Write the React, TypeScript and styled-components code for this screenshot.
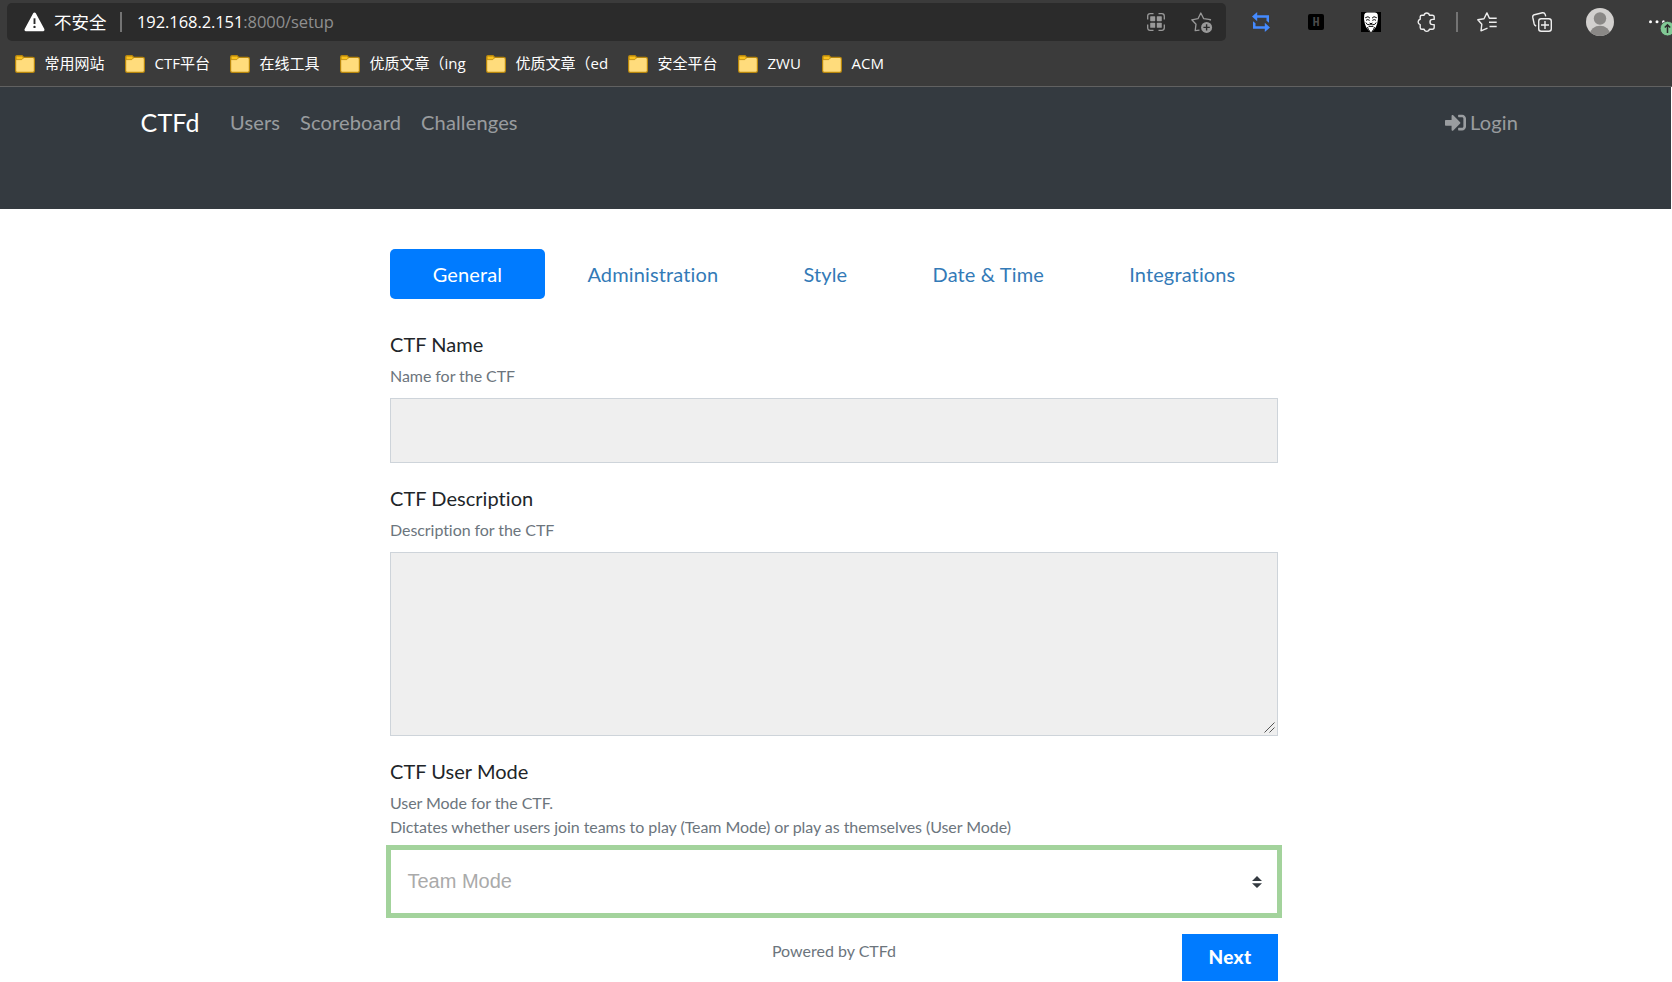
import React from "react";
import styled, { createGlobalStyle } from "styled-components";
import { FaSignInAlt } from "react-icons/fa";

const Global = createGlobalStyle`
  *, *::before, *::after { box-sizing: border-box; }
  html, body { margin: 0; padding: 0; background: #fff; overflow: hidden; }
  body { font-family: Lato, "Noto Sans", sans-serif; font-size: 20px; line-height: 30px; color: #212529; font-variant-ligatures: none; }
`;

const Screen = styled.div`
  width: 1672px;
  height: 982px;
  overflow: hidden;
  display: flex;
  flex-direction: column;
`;

const Chrome = styled.header`
  height: 87px;
  flex: none;
  background: #3b3b3b;
  border-bottom: 1px solid #616161;
  font-family: "Open Sans", "Noto Sans CJK SC", sans-serif;
  color: #fff;
`;

const Toolbar = styled.div`
  height: 44px;
  display: flex;
  align-items: center;
  padding-left: 7px;
`;

const AddressBar = styled.div`
  width: 1219px;
  height: 38px;
  border-radius: 5px;
  background: #2b2b2b;
  display: flex;
  align-items: center;
  padding: 0 14px 0 17px;
`;

const Insecure = styled.span`
  width: 65px;
  padding-left: 9px;
  font-size: 17.5px;
  line-height: 24px;
  white-space: nowrap;
`;

const Divider = styled.span<{ $left?: number }>`
  width: 2px;
  height: 20px;
  flex: none;
  margin-left: ${(p) => p.$left ?? 0}px;
  background: #747474;
`;

const Url = styled.span`
  flex: 1;
  margin-left: 15px;
  font-size: 16.5px;
  line-height: 24px;
  letter-spacing: -0.08px;
  white-space: nowrap;
`;

const UrlRest = styled.span`
  color: #8f8f8f;
`;

const Icon = styled.svg<{ $left?: number }>`
  display: block;
  flex: none;
  overflow: visible;
  margin-left: ${(p) => p.$left ?? 0}px;
`;

const Bookmarks = styled.nav`
  height: 40px;
  display: flex;
  align-items: center;
  padding-left: 15px;
`;

const Bookmark = styled.span<{ $slot: number }>`
  width: ${(p) => p.$slot}px;
  display: flex;
  align-items: center;
  gap: 9.5px;
  font-size: 15px;
  line-height: 20px;
  white-space: nowrap;
`;

const BookmarkName = styled.span`
  padding-bottom: 2px;
`;

const Navbar = styled.nav`
  width: 1671px;
  height: 122px;
  flex: none;
  background: #343a40;
  display: flex;
  align-items: flex-start;
  padding: 20px 143px 0 140.5px;
`;

const Brand = styled.a`
  width: 79.5px;
  font-size: 25px;
  letter-spacing: 0.2px;
  color: #fff;
`;

const NavLink = styled.a`
  display: flex;
  align-items: center;
  gap: 4px;
  margin: 0 10px;
  letter-spacing: 0.15px;
  color: rgba(255, 255, 255, 0.5);
`;

const Spacer = styled.span`
  flex: 1;
`;

const Setup = styled.main`
  width: 888px;
  margin: 40px 0 0 390px;
  display: flex;
  flex-direction: column;
`;

const Tabs = styled.div`
  display: flex;
  margin-bottom: 30px;
`;

const Tab = styled.a<{ $active?: boolean }>`
  flex: 1 1 auto;
  padding: 10px 20px;
  text-align: center;
  letter-spacing: 0.13px;
  border-radius: 5px;
  color: ${(p) => (p.$active ? "#fff" : "#337ab7")};
  background: ${(p) => (p.$active ? "#007bff" : "transparent")};
`;

const Field = styled.div`
  display: flex;
  flex-direction: column;
  margin-bottom: 20px;
`;

const Label = styled.label`
  height: 35px;
  letter-spacing: 0.04px;
`;

const Help = styled.small`
  font-size: 16px;
  line-height: 24px;
  letter-spacing: -0.06px;
  color: #6c757d;
`;

const TextBox = styled.div<{ $height: number }>`
  height: ${(p) => p.$height}px;
  margin-top: 10px;
  background: #efefef;
  border: 1px solid #ced4da;
  display: flex;
  justify-content: flex-end;
  align-items: flex-end;
`;

const Select = styled.div`
  height: 73px;
  margin: 6px -4px 0;
  border: 5px solid #a3d39c;
  display: flex;
  align-items: center;
  justify-content: space-between;
  padding: 0 15px 0 16.5px;
  font-family: "Liberation Sans", sans-serif;
  color: #aaa;
`;

const SelectValue = styled.span`
  padding-bottom: 2px;
`;

const Footer = styled.footer`
  display: grid;
  grid-template-columns: 1fr auto 1fr;
  align-items: start;
  margin-top: -4px;
`;

const Powered = styled(Help)`
  grid-column: 2;
  margin-top: 5px;
  letter-spacing: 0;
`;

const NextButton = styled.button`
  justify-self: end;
  width: 96px;
  height: 47px;
  border: 0;
  padding: 0 0 2px;
  background: #007bff;
  color: #fff;
  font: 900 19px/30px Lato, sans-serif;
  letter-spacing: 0.3px;
`;

const bookmarks: [string, number][] = [
  ["常用网站", 110],
  ["CTF平台", 105],
  ["在线工具", 110],
  ["优质文章（ing", 146],
  ["优质文章（ed", 142],
  ["安全平台", 110],
  ["ZWU", 84],
  ["ACM", 90],
];

const Folder = () => (
  <Icon width="20" height="18" viewBox="0 0 20 18">
    <path d="M.6 2.3Q.6.6 2.2.6H7L8.8 2.4H17.7Q19.4 2.4 19.4 4V15.7Q19.4 17.4 17.7 17.4H2.3Q.6 17.4.6 15.7Z" fill="#ffdc7c" stroke="#b8860b" strokeWidth="1.2" />
    <path d="M1.2 4.6V2.4Q1.2 1.2 2.4 1.2H6.8L8.5 2.8 6.8 4.6Z" fill="#fcc21b" stroke="#b8860b" strokeWidth=".8" />
  </Icon>
);

const Warning = () => (
  <Icon width="21" height="20" viewBox="0 0 21 20">
    <path d="M10.5 2 19 17.8H2Z" fill="#fff" stroke="#fff" strokeWidth="3" strokeLinejoin="round" />
    <path d="M10.5 6.3v5.7" stroke="#2b2b2b" strokeWidth="1.9" />
    <circle cx="10.5" cy="14.9" r="1.2" fill="#2b2b2b" />
  </Icon>
);

const Apps = () => (
  <Icon width="18" height="18" viewBox="0 0 18 18" fill="#999">
    <path d="M6.5.7H3.2Q.7.7.7 3.2v3.3M11.5.7h3.3q2.5 0 2.5 2.5v3.3M17.3 11.5v3.3q0 2.5-2.5 2.5h-3.3M6.5 17.3H3.2Q.7 17.3.7 14.8v-3.3" fill="none" stroke="#999" strokeWidth="1.3" />
    <rect x="3.2" y="3.2" width="5" height="5" rx=".6" />
    <rect x="9.8" y="3.2" width="5" height="5" rx=".6" />
    <rect x="3.2" y="9.8" width="5" height="5" rx=".6" />
    <rect x="9.8" y="9.8" width="5" height="5" rx=".6" />
  </Icon>
);

const AddFavorite = () => (
  <Icon width="21" height="20" viewBox="0 0 21 20" $left={26}>
    <path d="M8.5 18.2 4.2 18.6 5 12.2.8 7.8 7 6.7 9.8 1l2.9 5.7 6.8 1-.8 1" fill="none" stroke="#999" strokeWidth="1.3" strokeLinejoin="round" />
    <circle cx="15.6" cy="15.4" r="5.5" fill="#999" />
    <path d="M12.4 15.4h6.4M15.6 12.2v6.4" stroke="#2b2b2b" strokeWidth="1.4" />
  </Icon>
);

const Loop = () => (
  <Icon width="18" height="20" viewBox="0 0 18 20" $left={26} fill="#448aff">
    <path d="M0 4.600 5.200 0V3.200H17V10.800L14.500 8.800V5.800H5.200V9.200Z" />
    <path d="M18 15.400 12.800 20V16.800H1V9.200L3.500 11.200V14.200H12.800V10.800Z" />
  </Icon>
);

const LetterTile = styled.span`
  width: 16px;
  height: 16px;
  margin-left: 38px;
  border-radius: 2px;
  background: #000;
  color: #4a4a4a;
  display: flex;
  align-items: center;
  justify-content: center;
  padding-top: 1px;
  font: 700 12px/16px "Liberation Mono", monospace;
`;

const Mask = () => (
  <Icon width="20" height="20" viewBox="0 0 20 20" $left={37}>
    <path d="M0 0h20v20H0z" fill="#000" />
    <path d="M3.300 2.600Q4 .7 6 .6h8q2 .1 2.700 2 .8 4-.5 8.900-.7 3.800-3.800 6.900L10 20l-2.400-1.600Q4.500 15.300 3.800 11.500 2.500 6.600 3.300 2.600Z" fill="#fff" />
    <path d="M4.200 5.800 7 4.700l2 1.500M15.800 5.800 13 4.700l-2 1.500M5 8.300l1.800-.7 1.900.8M15 8.300l-1.800-.7-1.900.8M8.500 11l1.500.8 1.500-.8M4.800 10.500Q6 13.300 8.500 12.700L10 12l1.500.7q2.500.6 3.700-2.200M7.600 14.400h4.800M6.500 15q.6 2.500 2 4M13.500 15q-.6 2.500-2 4" fill="none" stroke="#000" strokeWidth=".95" />
  </Icon>
);

const Puzzle = () => (
  <Icon width="18" height="20" viewBox="0 0 18 20" $left={36}>
    <path d="M4.900 3.200H7.100a2.700 2.700 0 0 1 5.300 0H15.300q1.900 0 1.900 1.800V7.400H15.600a2.600 2.600 0 0 0 0 5.200H17.200V15.300q0 1.900-1.900 1.900H12.400a2.700 2.700 0 0 1-5.300 0H4.900q-1.700 0-1.700-1.800V12.600a2.800 2.800 0 0 1 0-5.400V4.800Q3.200 3.200 4.900 3.200Z" fill="none" stroke="#eee" strokeWidth="1.400" strokeLinejoin="round" />
  </Icon>
);

const Favorites = () => (
  <Icon width="20" height="20" viewBox="0 0 20 20" $left={19}>
    <path d="M10.500 16.200 4 18.800 4.800 12.300.8 7.700 7 6.700 9.900.9l2.500 5.400h7.300M12 10.300h7.700M12.500 14.500h7.200" fill="none" stroke="#eee" strokeWidth="1.400" strokeLinejoin="round" />
  </Icon>
);

const Collections = () => (
  <Icon width="20" height="20" viewBox="0 0 20 20" $left={35}>
    <path d="M4.200 14.200Q2.600 13.500 2.200 12L.8 5.500Q.4 3.300 2.400 2.700L10.400.8Q12.500.5 13.200 2.400L13.700 4.400" fill="none" stroke="#eee" strokeWidth="1.400" />
    <rect x="6.700" y="6.700" width="12.600" height="12.600" rx="2.500" fill="none" stroke="#eee" strokeWidth="1.400" />
    <path d="M13 9v8M9 13h8" stroke="#eee" strokeWidth="1.400" />
  </Icon>
);

const Avatar = () => (
  <Icon width="28" height="28" viewBox="0 0 28 28" $left={34}>
    <defs>
      <clipPath id="avatar-disc"><circle cx="14" cy="14" r="14" /></clipPath>
    </defs>
    <circle cx="14" cy="14" r="14" fill="#d2d0ce" />
    <g clipPath="url(#avatar-disc)" fill="#8a8886">
      <circle cx="14" cy="10.500" r="6.200" />
      <ellipse cx="14" cy="26" rx="10" ry="8.200" />
    </g>
  </Icon>
);

const More = () => (
  <Icon width="23" height="20" viewBox="0 0 23 20" $left={35}>
    <g fill="#fff">
      <circle cx="1.500" cy="9.700" r="1.500" />
      <circle cx="8" cy="9.700" r="1.500" />
      <circle cx="14.500" cy="9.700" r="1.500" />
    </g>
    <circle cx="18.500" cy="16.600" r="7.300" fill="#81c995" stroke="#3b3b3b" strokeWidth=".8" />
    <path d="M18.500 21v-8M15.800 15.500l2.700-2.700 2.700 2.700" fill="none" stroke="#2b2b2b" strokeWidth="1.500" />
  </Icon>
);

const Grip = () => (
  <Icon width="14" height="14" viewBox="0 0 14 14">
    <path d="M1.500 11.500 11.500 1.500M6.500 11.500 11.500 6.500" stroke="#555" strokeWidth="1" />
  </Icon>
);

const Sorter = () => (
  <Icon width="10" height="12" viewBox="0 0 10 12" fill="#343a40">
    <path d="M5 0 10 5H0ZM0 7.200H10L5 12Z" />
  </Icon>
);

export default function App() {
  return (
    <Screen>
      <Global />
      <Chrome>
        <Toolbar>
          <AddressBar>
            <Warning />
            <Insecure>不安全</Insecure>
            <Divider $left={10} />
            <Url>192.168.2.151<UrlRest>:8000/setup</UrlRest></Url>
            <Apps />
            <AddFavorite />
          </AddressBar>
          <Loop />
          <LetterTile>H</LetterTile>
          <Mask />
          <Puzzle />
          <Divider $left={21} />
          <Favorites />
          <Collections />
          <Avatar />
          <More />
        </Toolbar>
        <Bookmarks>
          {bookmarks.map(([name, slot]) => (
            <Bookmark key={name} $slot={slot}>
              <Folder />
              <BookmarkName>{name}</BookmarkName>
            </Bookmark>
          ))}
        </Bookmarks>
      </Chrome>
      <Navbar>
        <Brand>CTFd</Brand>
        <NavLink>Users</NavLink>
        <NavLink>Scoreboard</NavLink>
        <NavLink>Challenges</NavLink>
        <Spacer />
        <NavLink><FaSignInAlt size={21} />Login</NavLink>
      </Navbar>
      <Setup>
        <Tabs>
          <Tab $active>General</Tab>
          <Tab>Administration</Tab>
          <Tab>Style</Tab>
          <Tab>Date &amp; Time</Tab>
          <Tab>Integrations</Tab>
        </Tabs>
        <Field>
          <Label>CTF Name</Label>
          <Help>Name for the CTF</Help>
          <TextBox $height={65} />
        </Field>
        <Field>
          <Label>CTF Description</Label>
          <Help>Description for the CTF</Help>
          <TextBox $height={184}><Grip /></TextBox>
        </Field>
        <Field>
          <Label>CTF User Mode</Label>
          <Help>
            User Mode for the CTF.
            <br />
            Dictates whether users join teams to play (Team Mode) or play as themselves (User Mode)
          </Help>
          <Select>
            <SelectValue>Team Mode</SelectValue>
            <Sorter />
          </Select>
        </Field>
        <Footer>
          <Powered>Powered by CTFd</Powered>
          <NextButton>Next</NextButton>
        </Footer>
      </Setup>
    </Screen>
  );
}
